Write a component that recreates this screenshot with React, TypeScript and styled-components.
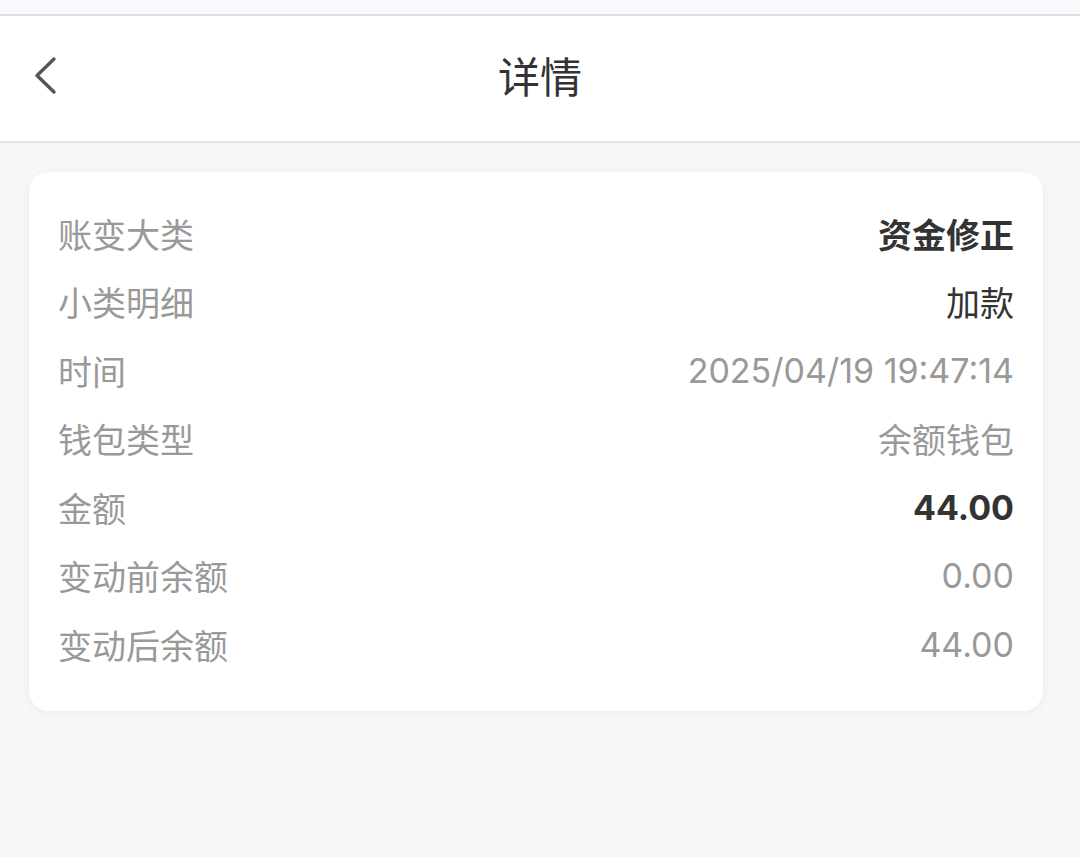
import React from "react";
import styled, { createGlobalStyle } from "styled-components";

const GlobalStyle = createGlobalStyle`
  html, body {
    margin: 0;
    padding: 0;
    background: #f7f7f7;
    font-family: Inter, "Noto Sans CJK SC", sans-serif;
  }
`;

const Page = styled.div`
  width: 1080px;
  min-height: 857px;
  background: #f7f7f7;
`;

const StatusStrip = styled.div`
  height: 14px;
  background: #fbf9fc;
  border-bottom: 2px solid #e0dde6;
`;

const Header = styled.header`
  height: 125px;
  background: #ffffff;
  border-bottom: 2px solid #e4e4e4;
  display: flex;
  align-items: center;
  justify-content: center;
  position: relative;
`;

const BackButton = styled.button`
  position: absolute;
  left: 27px;
  top: 36px;
  width: 36px;
  height: 48px;
  border: none;
  background: none;
  padding: 0;
  display: flex;
  align-items: center;
  justify-content: center;
`;

const Title = styled.h1`
  margin: 0 0 8px;
  font-size: 42px;
  font-weight: 400;
  color: #333333;
  font-family: "Noto Sans CJK SC", sans-serif;
`;

const Content = styled.main`
  padding: 29px 37px 29px 29px;
`;

const Card = styled.section`
  background: #ffffff;
  border-radius: 20px;
  box-shadow: 0 2px 10px rgba(0, 0, 0, 0.05);
  padding: 27px 29px 32px;
  display: flex;
  flex-direction: column;
`;

const Row = styled.div`
  height: 68.5px;
  display: flex;
  align-items: center;
  justify-content: space-between;
`;

const Label = styled.span`
  font-family: "Noto Sans CJK SC", sans-serif;
  font-size: 34px;
  color: #999999;
`;

type Tone = "strong" | "dark" | "muted";

const Value = styled.span<{ $tone: Tone }>`
  font-size: 34px;
  color: ${p => (p.$tone === "muted" ? "#999999" : "#333333")};
  font-weight: ${p => (p.$tone === "strong" ? 700 : 400)};
`;

const rows: { label: string; value: string; tone: Tone }[] = [
  { label: "账变大类", value: "资金修正", tone: "strong" },
  { label: "小类明细", value: "加款", tone: "dark" },
  { label: "时间", value: "2025/04/19 19:47:14", tone: "muted" },
  { label: "钱包类型", value: "余额钱包", tone: "muted" },
  { label: "金额", value: "44.00", tone: "strong" },
  { label: "变动前余额", value: "0.00", tone: "muted" },
  { label: "变动后余额", value: "44.00", tone: "muted" },
];

export default function App() {
  return (
    <Page>
      <GlobalStyle />
      <StatusStrip />
      <Header>
        <BackButton aria-label="返回">
          <svg width="26" height="40" viewBox="0 0 26 40" fill="none">
            <path
              d="M22 3 L5 19.5 L22 36"
              stroke="#555555"
              strokeWidth="3.4"
              strokeLinecap="round"
              strokeLinejoin="round"
            />
          </svg>
        </BackButton>
        <Title>详情</Title>
      </Header>
      <Content>
        <Card>
          {rows.map(r => (
            <Row key={r.label}>
              <Label>{r.label}</Label>
              <Value $tone={r.tone}>{r.value}</Value>
            </Row>
          ))}
        </Card>
      </Content>
    </Page>
  );
}
